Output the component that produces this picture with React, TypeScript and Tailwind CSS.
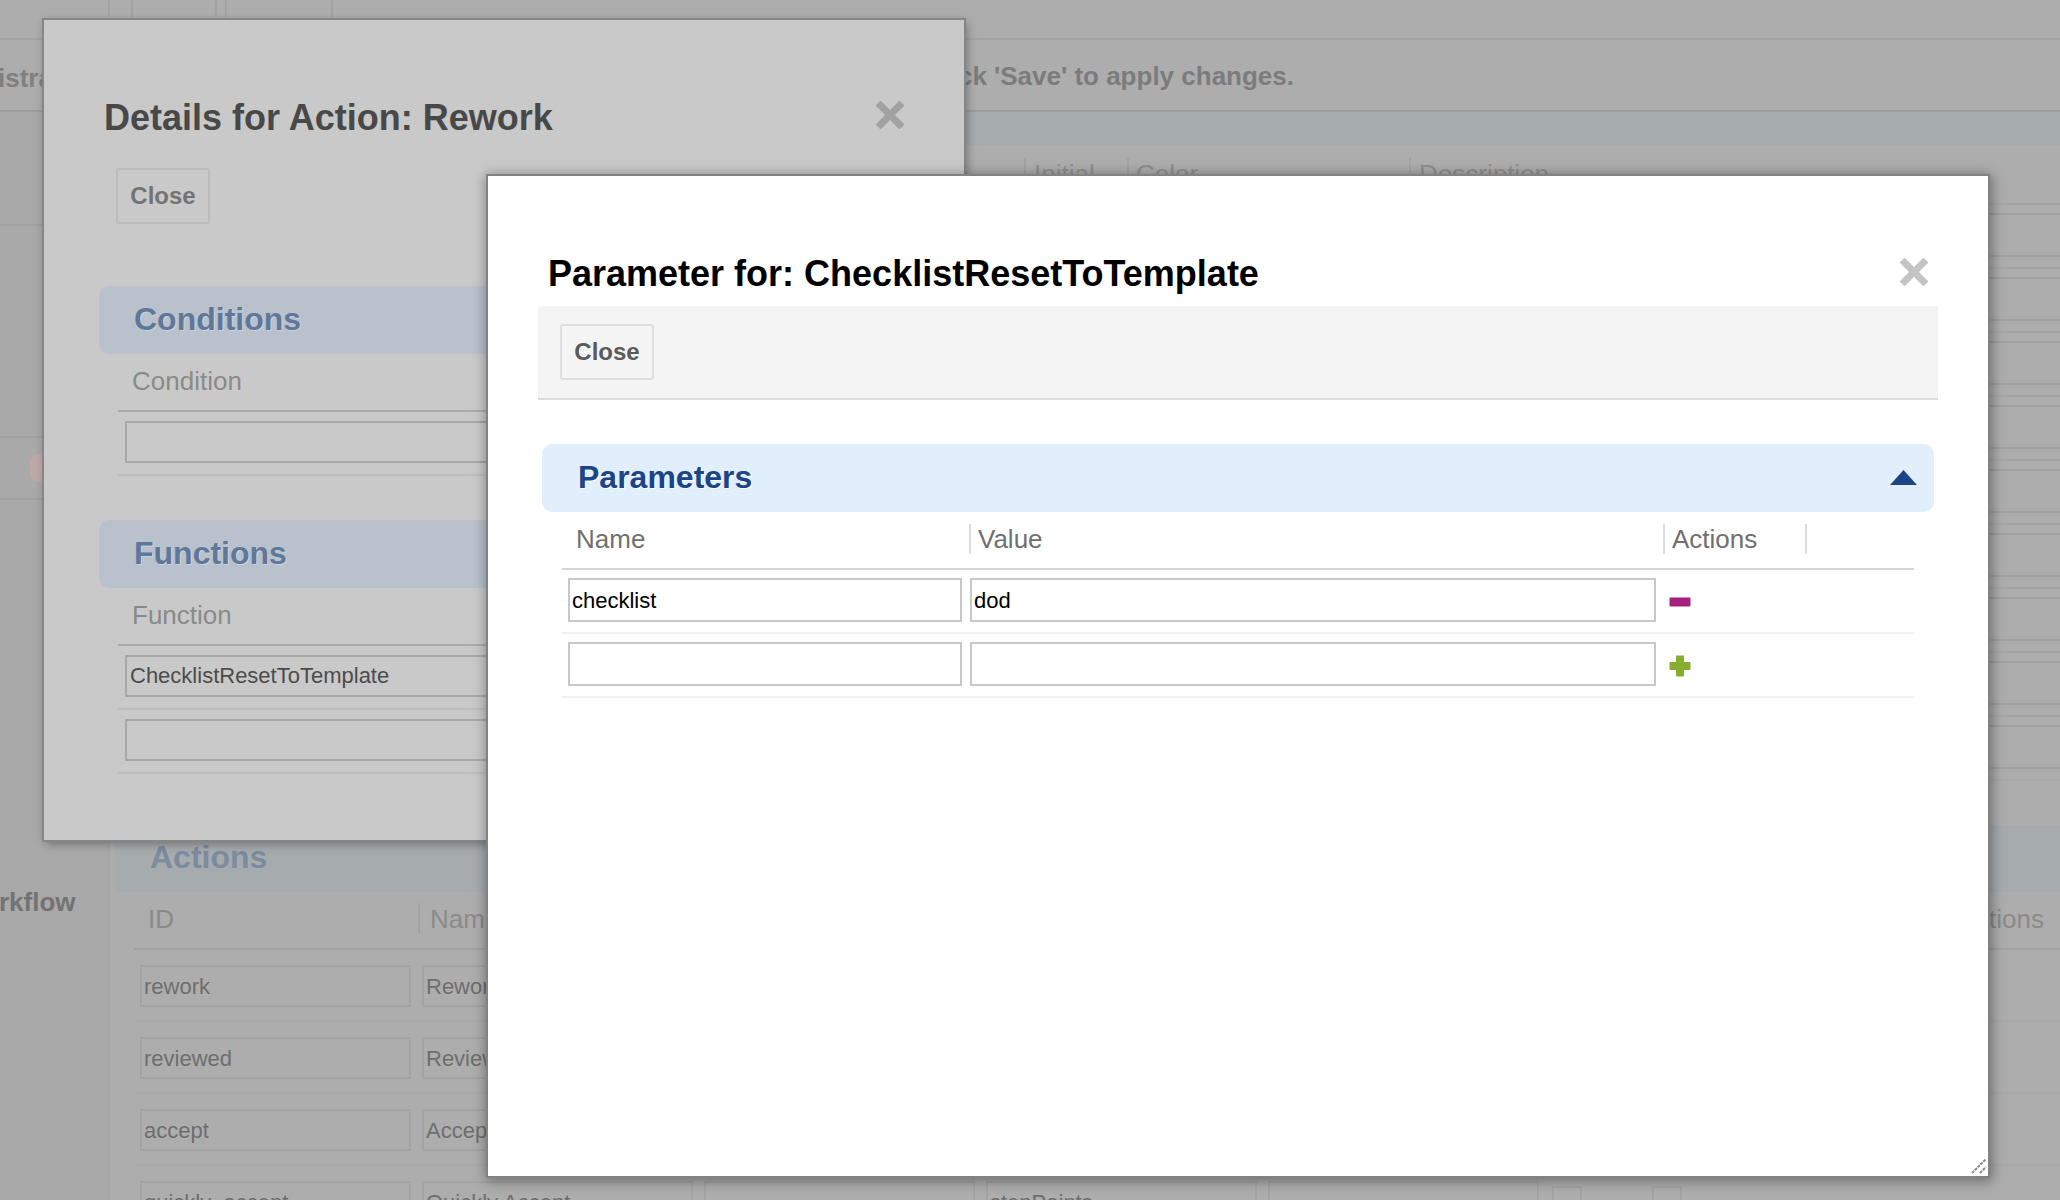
import React from 'react';

const CloseX = ({ color, className }: { color: string; className: string }) => (
  <svg width="30" height="28" viewBox="0 0 30 28" className={`shrink-0 ${className}`}>
    <path d="M5.5 4.5 L24.5 23.5 M24.5 4.5 L5.5 23.5" stroke={color} strokeWidth="7" strokeLinecap="square" fill="none" />
  </svg>
);

const Minus = () => (
  <svg width="22" height="10" viewBox="0 0 22 10" className="block">
    <rect x="0.5" y="0.5" width="21" height="9" rx="1" fill="#a6217f" />
  </svg>
);

const Plus = () => (
  <svg width="22" height="22" viewBox="0 0 22 22" className="block">
    <path d="M7 1.5 a1 1 0 0 1 1-1 h6 a1 1 0 0 1 1 1 V7 h5.5 a1 1 0 0 1 1 1 v6 a1 1 0 0 1-1 1 H15 v5.5 a1 1 0 0 1-1 1 H8 a1 1 0 0 1-1-1 V15 H1.5 a1 1 0 0 1-1-1 V8 a1 1 0 0 1 1-1 H7 Z" fill="#86ad2c" />
  </svg>
);

const ResizeGrip = () => (
  <svg width="16" height="16" viewBox="0 0 16 16" className="absolute right-[1px] bottom-[2px]">
    <path d="M1 15 L15 1 M9 15 L15 9" stroke="#8a8a8a" strokeWidth="2" strokeDasharray="3 1" fill="none" />
  </svg>
);

const dimInput = 'h-[42px] border-2 border-[#a3a3a3] px-[2px] pt-[1px] text-[22px] text-[#6e6e6e] bg-transparent outline-none shrink-0';
const backInput = 'h-[42px] border-2 border-[#a8a8a8] px-[3px] text-[22px] text-[#4c4c4c] bg-transparent outline-none block w-[800px]';
const frontInput = 'h-[44px] border-2 border-[#c8c8c8] px-[2px] pt-[2px] text-[22px] text-black bg-white outline-none block';

const actionRows = [
  ['rework', 'Rework'],
  ['reviewed', 'Reviewed'],
  ['accept', 'Accept'],
  ['quickly_accept', 'Quickly Accept'],
];

function Page() {
  return (
    <div className="w-[2060px] h-[1200px] flex flex-col">
      <div className="h-[40px] shrink-0 border-b-2 border-[#a3a3a3] flex items-start">
        <div className="w-[110px] h-[17px] border-r-2 border-[#a2a2a2]" />
        <div className="w-[23px] h-[17px] border-r-2 border-[#a2a2a2]" />
        <div className="w-[84px] h-[17px] border-r-2 border-[#a2a2a2]" />
        <div className="w-[10px] h-[17px] border-r-2 border-[#a2a2a2]" />
        <div className="w-[106px] h-[17px] border-r-2 border-[#a2a2a2]" />
      </div>
      <div className="h-[72px] shrink-0 border-b-2 border-[#9c9c9c] flex items-center justify-between pr-[766px] pb-[1px]">
        <span className="text-[26px] font-bold text-[#808080] mt-[8px] -ml-[2px]">istra</span>
        <span className="text-[26px] font-bold text-[#7c7c7c] mt-[3px]">Click 'Save' to apply changes.</span>
      </div>
      <div className="flex flex-1 min-h-0">
        <div className="w-[110px] shrink-0 border-r-2 border-[#a5a5a5] bg-[#a9a9a9] flex flex-col">
          <div className="h-[114px] border-b-2 border-[#a0a0a0]" />
          <div className="h-[212px] border-b-2 border-[#a0a0a0]" />
          <div className="h-[62px] border-b-2 border-[#a0a0a0] flex items-center pl-[30px]">
            <div className="w-[28px] h-[28px] rounded-[9px] bg-[#bfa8a8] flex items-center justify-center">
              <div className="w-[10px] h-[10px] bg-[#b8afaf]" />
            </div>
          </div>
          <div className="mt-[387px] -ml-[1px] text-[26px] leading-[30px] font-bold text-[#737373] whitespace-nowrap">rkflow</div>
        </div>
        <div className="flex-1 min-w-0 pl-[5px]">
          <div className="h-[33px] bg-[#a6abae]" />
          <div className="h-[58px] flex items-end">
            <div className="ml-[909px] w-[103px] h-[45px] border-l-2 border-[#a2a2a2] pl-[8px] text-[26px] leading-[30px] pt-[1px] text-[#8f8f8f]">Initial</div>
            <div className="w-[282px] h-[45px] border-l-2 border-[#a2a2a2] pl-[7px] text-[26px] leading-[30px] pt-[1px] text-[#8f8f8f]">Color</div>
            <div className="h-[45px] border-l-2 border-[#a2a2a2] pl-[8px] text-[26px] leading-[30px] pt-[1px] text-[#8f8f8f]">Description</div>
          </div>
          {[0, 1, 2, 3, 4, 5, 6, 7, 8].map(n => (
            <div key={n} className="h-[64px] border-t-2 border-[#a6a6a6] pt-[8px]">
              <div className="h-[44px] border-y-2 border-[#a0a0a0]" />
            </div>
          ))}
          <div className="border-t-2 border-[#a8a8a8] h-[46px]" />
          <div className="h-[67px] bg-[#a6abae] flex items-center pl-[35px]">
            <span className="text-[32px] font-bold text-[#7c8b9e] -mt-[3px]">Actions</span>
          </div>
          <div className="ml-[19px] h-[58px] border-b-2 border-[#a2a2a2] flex items-start pt-[11px]">
            <div className="w-[286px] h-[31px] border-r-2 border-[#a3a3a3] pl-[14px] pt-[1px] text-[26px] leading-[30px] text-[#8a8a8a]">ID</div>
            <div className="pl-[10px] pt-[1px] text-[26px] leading-[30px] text-[#8a8a8a]">Name</div>
            <div className="ml-auto pr-[16px] pt-[1px] text-[26px] leading-[30px] text-[#8a8a8a]">Actions</div>
          </div>
          {actionRows.map(([id, name], i) => (
            <div key={id} className="ml-[19px] h-[72px] border-b-2 border-[#a9a9a9] flex items-start gap-[11px] pl-[6px] pt-[15px]">
              <input readOnly value={id} className={`${dimInput} w-[271px]`} />
              <input readOnly value={name} className={`${dimInput} w-[271px]`} />
              {i === 3 && (
                <>
                  <input readOnly value="" className={`${dimInput} w-[271px]`} />
                  <input readOnly value="stepPoints" className={`${dimInput} w-[271px]`} />
                  <input readOnly value="" className={`${dimInput} w-[271px]`} />
                  <div className="ml-[2px] mt-[5px] w-[30px] h-[30px] border-2 border-[#a3a3a3]" />
                  <div className="ml-[59px] mt-[5px] w-[30px] h-[30px] border-2 border-[#a3a3a3]" />
                </>
              )}
            </div>
          ))}
        </div>
      </div>
    </div>
  );
}

function DetailsDialog() {
  return (
    <div className="absolute left-[44px] top-[20px] w-[920px] h-[820px] bg-[#c9c9c9] shadow-[0_0_0_2px_#868686,2px_3px_10px_rgba(0,0,0,0.4)]">
      <div className="flex items-center justify-between pl-[60px] pr-[59px] pt-[74px] h-[116px]">
        <h2 className="text-[36px] leading-[42px] font-bold text-[#484848] mt-[6px]">Details for Action: Rework</h2>
        <CloseX color="#a2a2a2" className="mt-[0px]" />
      </div>
      <div className="ml-[72px] mt-[32px] w-[94px] h-[56px] border-2 border-[#bcbcbc] rounded-[3px] flex items-center justify-center text-[24px] font-bold text-[#737373]">Close</div>
      <div className="ml-[55px] mr-[25px] mt-[62px] h-[68px] rounded-[10px] bg-[#b8c1cc] flex items-center pl-[35px]">
        <span className="text-[32px] font-bold text-[#5f7899] -mt-[2px] [text-shadow:1px_1px_0_#ccd2da]">Conditions</span>
      </div>
      <div className="ml-[74px] h-[58px] border-b-2 border-[#ababab] pl-[14px] pt-[12px] text-[26px] leading-[30px] text-[#8a8a8a]">Condition</div>
      <div className="ml-[74px] h-[64px] border-b-2 border-[#bfbfbf] pl-[7px] pt-[9px]">
        <input readOnly value="" className={backInput} />
      </div>
      <div className="ml-[55px] mr-[25px] mt-[44px] h-[68px] rounded-[10px] bg-[#b8c1cc] flex items-center pl-[35px]">
        <span className="text-[32px] font-bold text-[#5f7899] -mt-[2px] [text-shadow:1px_1px_0_#ccd2da]">Functions</span>
      </div>
      <div className="ml-[74px] h-[58px] border-b-2 border-[#ababab] pl-[14px] pt-[12px] text-[26px] leading-[30px] text-[#8a8a8a]">Function</div>
      <div className="ml-[74px] h-[64px] border-b-2 border-[#bfbfbf] pl-[7px] pt-[9px]">
        <input readOnly value="ChecklistResetToTemplate" className={backInput} />
      </div>
      <div className="ml-[74px] h-[64px] border-b-2 border-[#bfbfbf] pl-[7px] pt-[9px]">
        <input readOnly value="" className={backInput} />
      </div>
    </div>
  );
}

function ParameterDialog() {
  return (
    <div className="absolute left-[488px] top-[176px] w-[1500px] h-[1000px] bg-white shadow-[0_0_0_2px_#828282,1px_2px_12px_3px_rgba(0,0,0,0.38)]">
      <div className="flex items-center justify-between pl-[60px] pr-[59px] pt-[64px] h-[130px]">
        <h2 className="text-[36px] leading-[42px] font-bold text-black mt-[2px]">Parameter for: ChecklistResetToTemplate</h2>
        <CloseX color="#c4c4c4" className="-mt-[3px]" />
      </div>
      <div className="mx-[50px] h-[94px] bg-[#f4f4f4] border-b-2 border-[#dcdcdc] pl-[22px] pt-[18px]">
        <div className="w-[94px] h-[56px] border-2 border-[#dedede] rounded-[3px] flex items-center justify-center text-[24px] font-bold text-[#5a5a5a]">Close</div>
      </div>
      <div className="mx-[54px] mt-[44px] h-[68px] rounded-[10px] bg-[#e1eefc] flex items-center justify-between pl-[36px] pr-[17px]">
        <span className="text-[32px] font-bold text-[#1c4587] -mt-[2px] [text-shadow:1px_1px_0_#fff]">Parameters</span>
        <svg width="27" height="15" viewBox="0 0 27 15" className="-mt-[2px]"><path d="M13.5 0 L27 15 H0 Z" fill="#1c4587" /></svg>
      </div>
      <div className="ml-[74px] w-[1352px]">
        <div className="grid grid-cols-[407px_694px_142px_1fr] h-[58px] border-b-2 border-[#d5d5d5] pt-[12px]">
          <div className="pl-[14px] text-[26px] leading-[30px] text-[#707070]">Name</div>
          <div className="h-[30px] border-l-2 border-[#dcdcdc] pl-[7px] text-[26px] leading-[30px] text-[#707070]">Value</div>
          <div className="h-[30px] border-l-2 border-[#dcdcdc] pl-[7px] text-[26px] leading-[30px] text-[#707070]">Actions</div>
          <div className="h-[30px] border-l-2 border-[#dcdcdc]" />
        </div>
        <div className="grid grid-cols-[407px_694px_142px_1fr] h-[64px] border-b-2 border-[#f0f0f0] pt-[8px]">
          <input readOnly value="checklist" className={`${frontInput} ml-[6px] w-[394px]`} />
          <input readOnly value="dod" className={`${frontInput} ml-[1px] w-[686px]`} />
          <div className="pl-[6px] pt-[19px]"><Minus /></div>
        </div>
        <div className="grid grid-cols-[407px_694px_142px_1fr] h-[64px] border-b-2 border-[#f0f0f0] pt-[8px]">
          <input readOnly value="" className={`${frontInput} ml-[6px] w-[394px]`} />
          <input readOnly value="" className={`${frontInput} ml-[1px] w-[686px]`} />
          <div className="pl-[6px] pt-[13px]"><Plus /></div>
        </div>
      </div>
      <ResizeGrip />
    </div>
  );
}

export default function App() {
  return (
    <div className="relative w-[2060px] h-[1200px] overflow-hidden bg-[#adadad] font-['Liberation_Sans',Arial,sans-serif]">
      <Page />
      <DetailsDialog />
      <ParameterDialog />
    </div>
  );
}
